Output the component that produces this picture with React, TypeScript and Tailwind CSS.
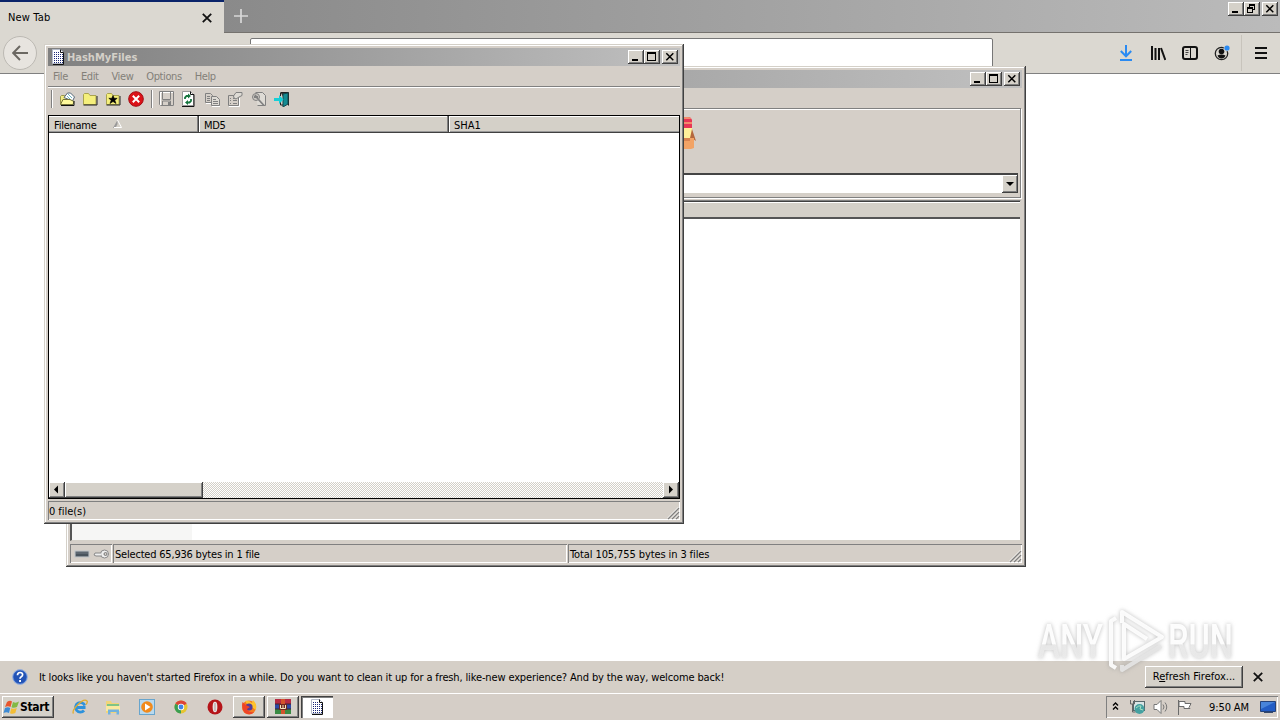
import type { ReactNode } from 'react';
import clsx from 'clsx';

const RAISED =
  'bg-[#d5d1c9] shadow-[inset_-1px_-1px_0_#404040,inset_1px_1px_0_#ffffff,inset_-2px_-2px_0_#808080]';
const FRAME =
  'bg-[#d5cfc8] shadow-[inset_-1px_-1px_0_#404040,inset_1px_1px_0_#d4d0c8,inset_-2px_-2px_0_#808080,inset_2px_2px_0_#ffffff]';
const SUNKEN = 'shadow-[inset_1px_1px_0_#808080,inset_-1px_-1px_0_#ffffff]';

function Glyph({ w = 16, h = 16, className, children }: { w?: number; h?: number; className?: string; children: ReactNode }) {
  return (
    <svg width={w} height={h} viewBox={`0 0 ${w} ${h}`} className={clsx('block shrink-0', className)} fill="none">
      {children}
    </svg>
  );
}

type ButtonKind = 'min' | 'max' | 'restore' | 'close';

function CaptionButton({ kind }: { kind: ButtonKind }) {
  return (
    <button className={clsx('h-3.5 w-4 shrink-0', RAISED, kind === 'close' && 'ml-0.5')}>
      <Glyph h={14}>
        {kind === 'min' && <path d="M4 9h6v2H4z" fill="#000" />}
        {kind === 'max' && <path d="M3 2h9v9H3zM4 4v6h7V4z" fill="#000" fillRule="evenodd" />}
        {kind === 'restore' && (
          <path d="M5 2h6v6H9v3H3V5h2zM6 4v1h3v2h1V4zM4 7v3h4V7z" fill="#000" fillRule="evenodd" />
        )}
        {kind === 'close' && <path d="M4.3 3.3l7 7M11.3 3.3l-7 7" stroke="#000" strokeWidth="1.5" />}
      </Glyph>
    </button>
  );
}

function CaptionButtons({ restore }: { restore?: boolean }) {
  return (
    <div className="flex">
      <CaptionButton kind="min" />
      <CaptionButton kind={restore ? 'restore' : 'max'} />
      <CaptionButton kind="close" />
    </div>
  );
}

function HashIcon() {
  return (
    <Glyph>
      <path d="M2.5.5h8l3 3v11h-11z" fill="#fff" stroke="#b4bac8" />
      <path d="M10.5.5v3h3v12H3" stroke="#111" />
      <path
        d="M4 3.5h6M4 5.5h9M4 7.5h9M4 9.5h9M4 11.5h9M4 13.5h9"
        stroke="#1c2878"
        strokeDasharray="1 1"
        shapeRendering="crispEdges"
      />
    </Glyph>
  );
}

function Grip() {
  return (
    <Glyph w={13} h={13}>
      <path d="M1 12L12 1M5 12l7-7M9 12l3-3" stroke="#808080" strokeWidth="1.3" />
      <path d="M0 11.5L11.5 0M4 11.5L11.5 4M8 11.5l3.5-3.5" stroke="#fff" strokeWidth=".7" />
    </Glyph>
  );
}

function FirefoxWindow() {
  return (
    <div className="flex min-h-0 flex-1 flex-col bg-white">
      <div className="flex h-[33px] shrink-0 bg-linear-to-r from-[#808080] to-[#bbbbbb]">
        <div className="flex w-56 items-center justify-between border-t-2 border-[#0a246a] bg-[#dbd8d1] pr-3 pl-2">
          <span className="tracking-[0.15px]">New Tab</span>
          <Glyph w={10} h={10}>
            <path d="M.8.8l8.4 8.4M9.2.8L.8 9.2" stroke="#111" strokeWidth="1.8" />
          </Glyph>
        </div>
        <div className="flex flex-1 items-start justify-between border-b border-[#75726e]">
          <Glyph w={14} h={14} className="mt-[9px] ml-2.5">
            <path d="M7 0v14M0 7h14" stroke="#d8d8d8" strokeWidth="1.7" />
          </Glyph>
          <div className="mt-0.5 mr-0.5">
            <CaptionButtons restore />
          </div>
        </div>
      </div>
      <div className="flex h-[41px] shrink-0 border-b border-[#808080] bg-[#dbd8d1]">
        <div className="mt-[3px] ml-[3px] flex size-[34px] items-center justify-center rounded-full border border-[#bcb9b3] bg-[#e7e4df]">
          <Glyph>
            <path d="M16 8H1.5M8 1L1.2 8 8 15" stroke="#6b6862" strokeWidth="2" />
          </Glyph>
        </div>
        <div className="mt-[5px] ml-[213px] h-[30px] w-[743px] rounded-xs border border-[#777] bg-white" />
        <div className="ml-auto flex h-10 items-center pr-3">
          <Glyph className="mr-4">
            <path d="M8 0v11M2.8 6L8 11.3 13.2 6M2 15h12" stroke="#2a8af2" strokeWidth="2" />
          </Glyph>
          <Glyph className="mr-4">
            <path d="M2 1v14M5.500 3v12M9 3v12" stroke="#111" strokeWidth="2" />
            <path d="M11 3l4.300 12" stroke="#111" strokeWidth="2" />
          </Glyph>
          <Glyph className="mr-4">
            <rect x="1" y="2" width="14" height="12" rx="2" stroke="#111" strokeWidth="2" />
            <path d="M8.500 2v12" stroke="#111" />
            <path d="M3.500 5.500h3M3.500 7.500h3M3.500 9.500h2" stroke="#444" />
          </Glyph>
          <Glyph className="mr-[11px]">
            <circle cx="7.500" cy="8.500" r="6.200" stroke="#222" strokeWidth="1.300" />
            <circle cx="7.500" cy="6.500" r="2.800" fill="#111" />
            <path d="M3.500 10.500q4-2 8 0-1 3-4 3t-4-3z" fill="#111" />
            <circle cx="13" cy="3" r="3.300" fill="#dbd8d1" />
            <circle cx="13" cy="3" r="2.600" fill="#2a8af2" />
          </Glyph>
          <div className="mr-3 h-9 w-px bg-[#c8c4bc]" />
          <Glyph w={14} h={14}>
            <path d="M1 2h12M1 7h12M1 12h12" stroke="#111" strokeWidth="2" />
          </Glyph>
        </div>
      </div>
    </div>
  );
}

function NotificationBar() {
  return (
    <div className="flex h-8 shrink-0 items-center bg-[#d5cfc7] pl-3">
      <Glyph>
        <circle cx="8" cy="8" r="7.400" fill="#3568c8" stroke="#9ab1dc" />
        <circle cx="8" cy="8" r="6.200" fill="#2353b5" />
        <path d="M5.500 6.200q0-2.700 2.600-2.700t2.500 2.200q0 1.200-1.300 2T8 9.800" stroke="#fff" strokeWidth="1.700" />
        <path d="M7.100 11h1.900v1.900H7.100z" fill="#fff" />
      </Glyph>
      <span className="ml-[11px] tracking-[-0.137px]">
        It looks like you haven't started Firefox in a while. Do you want to clean it up for a fresh, like-new
        experience? And by the way, welcome back!
      </span>
      <button className={clsx('mr-px ml-auto h-[22px] w-[98px] pb-0.5', RAISED)}>
        R<u>e</u>fresh Firefox...
      </button>
      <Glyph w={10} h={10} className="mr-[17px] ml-[9px]">
        <path d="M.8.8l8.400 8.400M9.200.8L.8 9.200" stroke="#111" strokeWidth="1.800" />
      </Glyph>
    </div>
  );
}

function ArchiveWindow() {
  return (
    <div className={clsx('absolute top-[66px] left-[66px] flex h-[501px] w-[960px] flex-col p-1', FRAME)}>
      <div className="flex h-[18px] shrink-0 items-center justify-end bg-linear-to-r from-[#808080] to-[#c0c0c0] pr-0.5">
        <CaptionButtons />
      </div>
      <div className="h-[20px] shrink-0" />
      <div className="mr-px flex h-[90px] shrink-0 flex-col border border-[#808080] shadow-[inset_1px_1px_0_#fff,1px_1px_0_#fff]">
        <div className="flex-1 pt-[7px] pl-[597px]">
          <Glyph w={32} h={34}>
            <path d="M8 1h12q3 0 4 3v10H8z" fill="#e73656" />
            <path d="M8 1h12q3 0 3 2H8zM8 6h16v2H8z" fill="#f48b6b" />
            <path d="M4 12h20l1 10H4z" fill="#fff09a" />
            <path d="M24 13l4 12-3-2-3-1z" fill="#b5683d" />
            <path d="M2 22h24v10l-3 1H2z" fill="#f2a365" />
            <path d="M2 22h20v3H2z" fill="#d88350" />
          </Glyph>
        </div>
        <div className="mr-0.5 mb-[3px] flex h-[21px] justify-end border-t-2 border-b border-t-[#444] border-b-[#d4d0c8] bg-white pt-0">
          <button className={clsx('h-[18px] w-4', RAISED)}>
            <Glyph h={18}>
              <path d="M4 7h8L8 11z" fill="#000" />
            </Glyph>
          </button>
        </div>
      </div>
      <div className="mt-0.5 mr-px flex min-h-0 flex-1 flex-col border-t border-r border-b border-l-2 border-t-[#808080] border-r-[#d4d0c8] border-b-[#d4d0c8] border-l-[#555] bg-white">
        <div className="h-[18px] shrink-0 border-t border-b-2 border-t-[#404040] border-b-[#555] bg-[#d4d0c8] shadow-[inset_0_1px_0_#fff]" />
        <div className="w-[120px] flex-1 bg-[#f6f6f5]" />
      </div>
      <div className="mt-[3px] flex h-[19px] shrink-0 gap-px">
        <div className={clsx('flex w-[42px] items-center gap-[3px] pl-1', SUNKEN)}>
          <Glyph>
            <rect x="1" y="5" width="14" height="6" fill="#5c6670" stroke="#bdc3c7" />
            <path d="M2 9h12" stroke="#35414b" />
          </Glyph>
          <Glyph>
            <circle cx="11.500" cy="8" r="4" fill="#eee" stroke="#888" />
            <circle cx="12.500" cy="8" r="1.500" fill="#d5cfc8" stroke="#777" />
            <path d="M8 7H2l-1 2 2 1h5" fill="#eee" stroke="#888" />
          </Glyph>
        </div>
        <div className={clsx('flex w-[454px] items-center pt-0.5 pl-0.5 tracking-[-0.2px]', SUNKEN)}>
          Selected 65,936 bytes in 1 file
        </div>
        <div className={clsx('flex flex-1 items-center justify-between pl-0.5', SUNKEN)}>
          <span className="pt-0.5 tracking-[-0.1px]">Total 105,755 bytes in 3 files</span>
          <div className="self-end">
            <Grip />
          </div>
        </div>
      </div>
    </div>
  );
}

function ToolIcons() {
  return (
    <div className="flex items-center">
      <Glyph className="ml-1.5">
        <path d="M1.500 13V5.500l1-1h3l1 2h6V13z" fill="#f1eb83" stroke="#99964b" />
        <path d="M5 6.500L8.500 2h3l4 4-2 4z" fill="#fff" stroke="#567" />
        <path d="M9 3l4 4M8 5l3 3" stroke="#6fb4c4" />
        <path d="M1.500 13.500L4 8.500h7l4 2-1 3z" fill="#fffa9c" stroke="#77743a" />
        <path d="M2 14.500h13V10" stroke="#111" />
      </Glyph>
      <Glyph className="ml-[7px]">
        <path d="M1.500 13.500v-10l1-1h4l1.500 2h6v9z" fill="#f5ef7c" stroke="#a9a34f" />
        <path d="M1.500 14h13.500V5" stroke="#222" />
      </Glyph>
      <Glyph className="ml-[7px]">
        <path d="M1.500 13.500v-10l1-1h4l1.500 2h6v9z" fill="#f5ef7c" stroke="#a9a34f" />
        <path d="M1.500 14h13.500V5" stroke="#222" />
        <path d="M8 4.500l1.200 2.800h3L9.800 9.200l1.200 3.300-3-2-3 2 1.200-3.300-2.400-1.900h3z" fill="#000" stroke="#000" strokeWidth=".6" />
      </Glyph>
      <Glyph className="ml-[7px]">
        <circle cx="8" cy="8" r="7.300" fill="#dc1218" stroke="#a30b12" />
        <path d="M4.800 4.800l6.400 6.400M11.200 4.800l-6.400 6.400" stroke="#fff" strokeWidth="2" />
      </Glyph>
      <div className="ml-[7px] h-[18px] w-0.5 border-l border-[#808080] bg-white" />
      <Glyph className="ml-[6px]">
        <path d="M1.500 15v-13M1 1.500h13M14.500 1v14M2 14.500h13" stroke="#fff" />
        <path d="M.5.5h14v14h-13l-1-1z" stroke="#808080" />
        <path d="M3.500 1v7.500h8V1M3.500 14v-4h8v4" stroke="#808080" />
        <path d="M9 11h2v3H9z" fill="#808080" />
      </Glyph>
      <Glyph className="ml-[5px]">
        <path d="M2.500.5h8l3 3v11h-11z" fill="#fff" stroke="#999" />
        <path d="M10.500.5v3H14v12H2" stroke="#111" />
        <path d="M5 8V6.500L6.500 5H9M11 8v2l-1.500 1.500H7" stroke="#16763e" strokeWidth="1.800" />
        <path d="M8 2.500L11 5 8 7.500zM8 9l-3 2.500L8 14z" fill="#16763e" />
      </Glyph>
      <Glyph className="ml-[8px]">
        <path d="M1.500 2.500h5l2 2v7h-7z" stroke="#808080" />
        <path d="M7.500 5.500h5l3 3v6h-8z" fill="#dedbd5" stroke="#808080" />
        <path d="M3 5.500h3M3 7.500h3M3 9.500h3M9 8.500h3M9 10.500h5M9 12.500h5" stroke="#808080" />
        <path d="M2 12.500h5M8 15.500h8" stroke="#fff" />
      </Glyph>
      <Glyph className="ml-[7px]">
        <path d="M1.500 4.500h10v10h-10z" stroke="#808080" />
        <path d="M3 7.500h1M6 7.500h3M3 9.500h1M6 9.500h4M3 12.500h1M6 12.500h4" stroke="#808080" />
        <path d="M6.500 5L9 1.500h6v3L12 6l-3 2-2-1z" fill="#dedbd5" stroke="#808080" />
        <path d="M12.500 7v8.500H2" stroke="#fff" />
      </Glyph>
      <Glyph className="ml-[8px]">
        <path d="M4.500 1.500h7l3 3v10h-8" fill="#dedbd5" stroke="#808080" />
        <circle cx="5" cy="6" r="3.500" fill="#ccc8c2" stroke="#808080" />
        <path d="M3 6h4M4 4l3 4M7.500 8.500l5.500 6" stroke="#808080" strokeWidth="1.800" />
      </Glyph>
      <Glyph className="ml-[7px]">
        <path d="M6.500 1.500h8v13" fill="#333" stroke="#222" />
        <path d="M9 3l5-1v11l-5 3z" fill="#158b92" stroke="#13484d" />
        <path d="M6.500 2v3M6.500 11v3H9" stroke="#222" />
        <path d="M0 7h5V4l4.500 4.500L5 13v-3H0z" fill="#18cfd7" />
      </Glyph>
    </div>
  );
}

function HashWindow() {
  return (
    <div className={clsx('absolute top-11 left-11 flex h-[480px] w-[640px] flex-col p-1', FRAME)}>
      <div className="flex h-[18px] shrink-0 items-center bg-linear-to-r from-[#808080] to-[#c0c0c0] pr-0.5 pl-0.5">
        <HashIcon />
        <span className="ml-px flex-1 font-bold text-[#d4d0c8]">HashMyFiles</span>
        <CaptionButtons />
      </div>
      <div className="flex h-5 shrink-0 items-center gap-[13px] pl-[5px] tracking-[-0.4px] text-[#838079]">
        <span>File</span>
        <span>Edit</span>
        <span>View</span>
        <span>Options</span>
        <span>Help</span>
      </div>
      <div className="flex h-[29px] shrink-0 items-start border-t border-[#808080] pt-[3px] pl-[3px] shadow-[inset_0_1px_0_#fff]">
        <div className="h-[18px] w-0.5 border-l border-[#808080] bg-white" />
        <ToolIcons />
      </div>
      <div className="flex h-96 shrink-0 flex-col border border-black bg-white">
        <div className="flex h-[17px] shrink-0 border-b border-[#404040] bg-[#d4d0c8] shadow-[inset_0_1px_0_#fff,inset_0_-1px_0_#999]">
          <div className="flex w-[150px] items-center border-r border-[#404040] pt-0.5 pl-[5px] shadow-[inset_-1px_0_0_#808080]">
            <span className="tracking-[-0.25px]">Filename</span>
            <Glyph w={9} h={8} className="mb-0.5 ml-4">
              <path d="M0 8L4.500 0v4L2.500 8z" fill="#999" />
              <path d="M4.500 0L8.500 7.500H1" stroke="#fff" />
            </Glyph>
          </div>
          <div className="flex w-[250px] items-center border-r border-[#404040] pt-0.5 pl-[5px] shadow-[inset_1px_0_0_#fff,inset_-1px_0_0_#808080]">
            <span className="tracking-[-0.3px]">MD5</span>
          </div>
          <div className="flex flex-1 items-center pt-0.5 pl-[5px] shadow-[inset_1px_0_0_#fff]">SHA1</div>
        </div>
        <div className="flex-1" />
        <div className="flex h-4 shrink-0 bg-[repeating-conic-gradient(#ffffff_0_25%,#d4d0c8_0_50%)] bg-[length:2px_2px]">
          <button className={clsx('w-4', RAISED)}>
            <Glyph>
              <path d="M9 3.500v8L5 7.500z" fill="#000" />
            </Glyph>
          </button>
          <div className={clsx('w-[138px]', RAISED)} />
          <button className={clsx('ml-auto w-4', RAISED)}>
            <Glyph>
              <path d="M6 3.500v8l4-4z" fill="#000" />
            </Glyph>
          </button>
        </div>
      </div>
      <div className={clsx('mt-0.5 flex flex-1 items-center justify-between pl-px', SUNKEN)}>
        <span className="pt-0.5 tracking-[-0.05px]">0 file(s)</span>
        <div className="self-end">
          <Grip />
        </div>
      </div>
    </div>
  );
}

function Taskbar() {
  return (
    <div className="flex h-[27px] shrink-0 items-center border-t border-white bg-[#d5cec7] pl-0.5">
      <button className={clsx('flex h-[22px] w-[52px] items-center pl-px', RAISED)}>
        <Glyph w={18} h={17}>
          <path d="M4 3q3-2 5-.5L7.500 8Q5 6.500 2 8z" fill="#e8552d" />
          <path d="M10 3q3 1.500 6-.5L14 8q-3 1.500-5.500.3z" fill="#83b944" />
          <path d="M2 9q3-1.500 5.200 0L6 14q-2.500-1.500-5.500 0z" fill="#3d8ad4" />
          <path d="M8.300 9.300q3 1.200 5.500-.3l-1.500 5q-2.500 1.500-5.300.3z" fill="#f3bd35" />
        </Glyph>
        <span className="-ml-px text-[12px] font-bold tracking-[-0.3px]">Start</span>
      </button>
      <Glyph className="ml-[18px]">
        <path d="M12.800 6.500A4.800 4.800 0 1 0 12 11.500M4 8.500h9.500" stroke="#2d92dc" strokeWidth="2.800" />
        <path d="M1.500 14.500Q-.5 12 6 5.500T15 2q1 1-1 3.500" stroke="#dfad32" strokeWidth="1.300" />
      </Glyph>
      <Glyph className="ml-[17px]">
        <path d="M1 2h5l1 2h7v10H1z" fill="#f1d578" />
        <path d="M2 5h12v3H2z" fill="#7fc486" />
        <path d="M1 7h14v5H1z" fill="#fae99f" />
        <path d="M3 15.500v-5h11v5h-2.500V13h-6v2.500z" fill="#72b2de" />
      </Glyph>
      <Glyph className="ml-[18px]">
        <rect x=".5" y=".5" width="15" height="15" fill="#b9d9ee" stroke="#68a5cd" />
        <circle cx="8" cy="8" r="5.800" fill="#f18a1c" />
        <path d="M6 4.500L11.500 8 6 11.500z" fill="#fff" />
      </Glyph>
      <Glyph className="ml-[18px]">
        <circle cx="8" cy="8" r="6.500" fill="#e6c531" />
        <path d="M8 8L2.400 4.700A6.500 6.500 0 0 1 13.600 4.700z" fill="#dc4437" />
        <path d="M8 8L2.400 4.700A6.500 6.500 0 0 0 8 14.500z" fill="#3a9e52" />
        <circle cx="8" cy="8" r="3.200" fill="#fff" />
        <circle cx="8" cy="8" r="2.400" fill="#4084e6" />
      </Glyph>
      <Glyph className="ml-[18px]">
        <circle cx="8" cy="8" r="7.500" fill="#b51419" />
        <ellipse cx="8" cy="8" rx="2.400" ry="5.300" fill="#e8e2e2" />
        <path d="M8 4v8" stroke="#a99" />
      </Glyph>
      <button className={clsx('ml-[10px] flex h-[22px] w-8 items-center justify-center', RAISED)}>
        <Glyph>
          <circle cx="8" cy="8.500" r="7" fill="#f47a20" />
          <path d="M4 2q4-1 7 2l1-3q5 5 2.500 10Q12 8 8 8z" fill="#ffc22d" />
          <circle cx="8" cy="8" r="3.600" fill="#513c9b" />
          <path d="M1.500 3Q0 10 4 14q6 3 9-1-5 1-7-3l3-2Q5 7 1.500 3z" fill="#ee4428" />
        </Glyph>
      </button>
      <button className={clsx('ml-[2px] flex h-[22px] w-8 items-center justify-center', RAISED)}>
        <Glyph w={18}>
          <path d="M1 0h16v5H1z" fill="#b72a42" />
          <path d="M1 5h16v5H1z" fill="#2d48a5" />
          <path d="M1 10h16v5H1z" fill="#3a8a42" />
          <path d="M1 5h16M1 10h16" stroke="#402530" />
          <path d="M7 0h4v15H7z" fill="#d3532b" />
          <path d="M5 5h8v6H5z" fill="#6d2720" />
          <path d="M6.500 6v3.500h5V6M9 6v3" stroke="#f5e9c0" />
        </Glyph>
      </button>
      <button className="ml-[2px] flex h-[22px] w-8 items-center justify-center bg-white shadow-[inset_1px_1px_0_#404040,inset_2px_2px_0_#808080,inset_-1px_-1px_0_#fff]">
        <HashIcon />
      </button>
      <div className={clsx('mr-0.5 ml-auto flex h-[22px] w-[172px] items-center', SUNKEN)}>
        <Glyph w={7} h={9} className="-mt-px ml-1.5">
          <path d="M1 3.500L3.500 1 6 3.500M1 7.500L3.500 5 6 7.500" stroke="#000" strokeWidth="1.400" />
        </Glyph>
        <Glyph className="ml-[10px]">
          <rect x="4.500" y="2.500" width="11" height="9" fill="#d9e5e5" stroke="#58666a" />
          <circle cx="10.500" cy="10" r="5" fill="#45a1a1" />
          <path d="M7 9q3-3 5-2l-1 3 3 1" stroke="#a9dfc0" />
          <path d="M1.500 1v4h4V1M3.500 5v8h3" stroke="#666" />
        </Glyph>
        <Glyph className="ml-2">
          <path d="M1 5.500h3l4-4v13l-4-4H1z" fill="#fff" stroke="#777" />
          <path d="M10 5.500q2 2.500 0 5M12 3.500q3.500 4.500 0 9" stroke="#777" />
        </Glyph>
        <Glyph className="ml-[7px]">
          <path d="M2.500 1v15M3 2.500h6v2h6l-2 4 1 1H8v-2H3z" fill="#fff" stroke="#6b6b6b" />
        </Glyph>
        <span className="ml-[17px] tracking-[-0.1px]">9:50 AM</span>
        <Glyph className="ml-[11px]">
          <path d="M.5 2.500h15v10H.5z" fill="#235dc5" stroke="#254279" />
          <path d="M1 3h14L1 10z" fill="#4884da" />
          <path d="M4 13.500h9" stroke="#36496b" />
        </Glyph>
      </div>
    </div>
  );
}

function Watermark() {
  return (
    <svg
      width="210"
      height="80"
      viewBox="0 0 210 80"
      className="pointer-events-none absolute top-[607px] left-[1037px] overflow-visible drop-shadow-[0_0_2px_#88888899]"
    >
      <defs>
        <linearGradient id="wm" x1="0" y1="0" x2="0" y2="1">
          <stop offset=".54" stopColor="#fff" stopOpacity=".95" />
          <stop offset=".56" stopColor="#ececec" stopOpacity=".85" />
        </linearGradient>
      </defs>
      <g fill="url(#wm)" className="font-['Roboto',sans-serif] text-[48px] leading-none font-medium">
        <text x="1" y="51" textLength="65" lengthAdjust="spacingAndGlyphs">ANY</text>
        <text x="131" y="51" textLength="65" lengthAdjust="spacingAndGlyphs">RUN</text>
      </g>
      <g fill="none" stroke="#fff" strokeWidth="4" strokeLinejoin="round" strokeOpacity=".9">
        <path d="M79 11l-5 3v44l5 3" />
        <path d="M85 16V5l40 25-38 22V17l23 15" />
        <path d="M85 58v5l39-24" stroke="#e6e6e6" />
      </g>
    </svg>
  );
}

export default function App() {
  return (
    <div className="relative flex h-[720px] w-[1280px] flex-col overflow-hidden font-['DejaVu_Sans_Condensed','Noto_Sans',sans-serif] text-[11px] leading-[13px] whitespace-nowrap text-black">
      <FirefoxWindow />
      <NotificationBar />
      <Taskbar />
      <ArchiveWindow />
      <HashWindow />
      <Watermark />
    </div>
  );
}
